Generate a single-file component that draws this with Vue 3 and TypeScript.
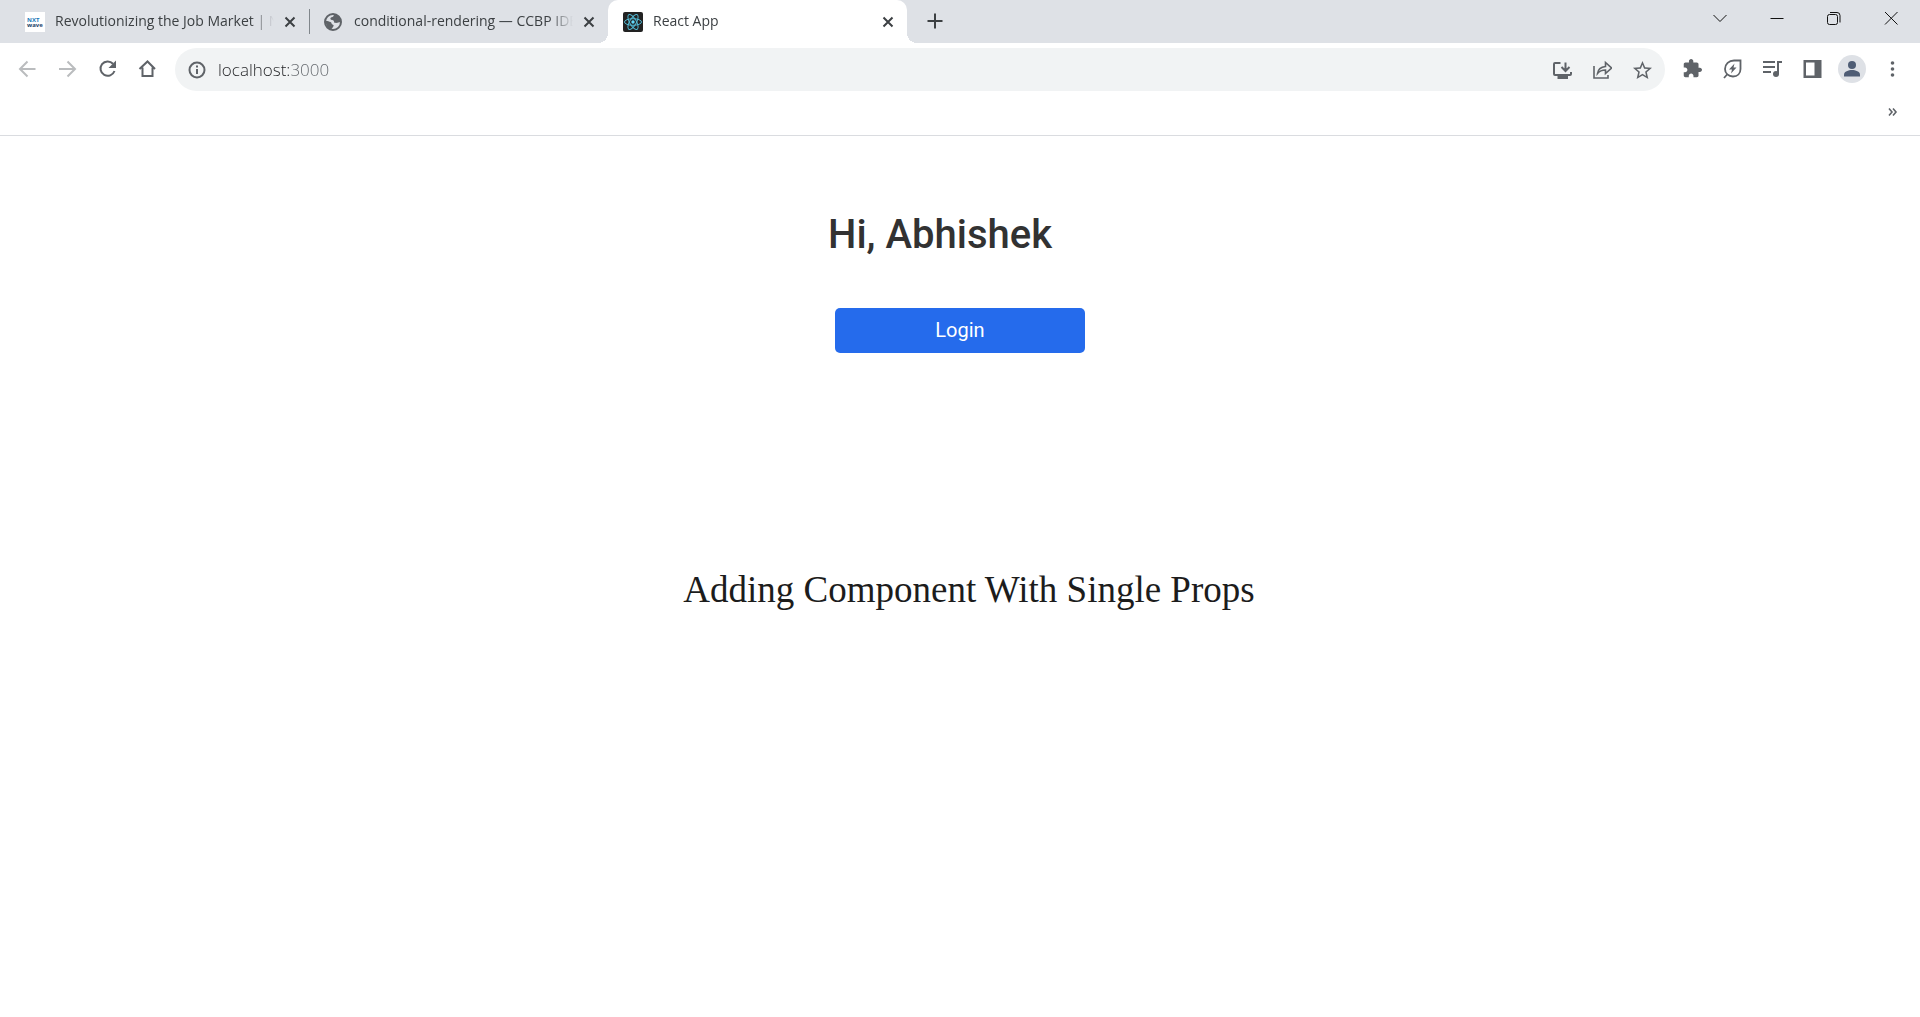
<script setup lang="ts">
import { ref } from 'vue'

interface Tab {
  id: string
  title: string
}

const tabs: Tab[] = [
  { id: 'nxtwave', title: 'Revolutionizing the Job Market | Nxt' },
  { id: 'globe', title: 'conditional-rendering — CCBP IDE' },
  { id: 'react', title: 'React App' },
]
const activeTab = ref('react')
const address = ref('localhost:3000')
</script>

<template>
  <div class="browser">
    <header>
      <div class="tab-strip">
        <div v-for="tab in tabs" :key="tab.id" class="tab" :class="{ active: tab.id === activeTab }">
          <button class="tab-select" type="button" @click="activeTab = tab.id">
            <svg v-if="tab.id === 'nxtwave'" class="icon" viewBox="0 0 20 20">
              <rect width="20" height="20" fill="#fff" />
              <text class="logo-text" x="2" y="10" fill="#1c79b8">NXT</text>
              <text class="logo-text" x="2" y="15" fill="#24436b">wave</text>
            </svg>
            <svg v-else-if="tab.id === 'globe'" class="icon" viewBox="0 0 20 20">
              <circle cx="9" cy="10" r="8" fill="#dee1e6" stroke="#5f6368" stroke-width="2" />
              <path d="M11 2.500c-2 .5-1 2-2.500 2.500s-2.500.5-2 2 3.500.5 3.500 2.500 3 1.500 4.500 1 2 .5 2.500-.5c0-4-2.500-7-6-7.500zM2 9c2 0 3 .5 4.500 1s.5 2 2 2.500 1.500 1 .5 2.500-1.500 2-2.500 2.500C3.500 16.500 1.500 13 2 9z" fill="#5f6368" />
            </svg>
            <svg v-else class="icon" viewBox="0 0 20 20">
              <rect width="20" height="20" rx="2" fill="#222" />
              <g fill="none" stroke="#53b9d3">
                <ellipse cx="10" cy="10" rx="8.500" ry="3.300" />
                <ellipse cx="10" cy="10" rx="8.500" ry="3.300" transform="rotate(60 10 10)" />
                <ellipse cx="10" cy="10" rx="8.500" ry="3.300" transform="rotate(120 10 10)" />
              </g>
              <circle cx="10" cy="10" r="1.700" fill="#61dafb" />
            </svg>
            <span class="tab-title">{{ tab.title }}</span>
          </button>
          <button class="tab-close" type="button" aria-label="Close tab">
            <svg class="icon" viewBox="0 0 20 20"><path d="M5.500 5.500l9 9M14.500 5.500l-9 9" fill="none" stroke="#3c4043" stroke-width="2" /></svg>
          </button>
        </div>
        <button class="icon-button new-tab" type="button" aria-label="New tab">
          <svg class="icon" viewBox="0 0 20 20"><path d="M10 2.500v15M2.500 10h15" stroke="#3c4043" stroke-width="2" /></svg>
        </button>
        <div class="window-controls">
          <button type="button" aria-label="Search tabs"><svg class="icon" viewBox="0 0 20 20"><path d="M3.500 7l6.500 6.500L16.500 7" /></svg></button>
          <button type="button" aria-label="Minimize"><svg class="icon" viewBox="0 0 20 20"><path d="M3.500 10.500h13" /></svg></button>
          <button type="button" aria-label="Restore"><svg class="icon" viewBox="0 0 20 20"><rect x="3.500" y="6.500" width="10" height="10" rx="2" /><path d="M6 4.500h7a3 3 0 0 1 3 3v7" /></svg></button>
          <button type="button" aria-label="Close window"><svg class="icon" viewBox="0 0 20 20"><path d="M4 4l12.500 12.500M16.500 4L4 16.500" /></svg></button>
        </div>
      </div>

      <div class="toolbar">
        <button class="icon-button disabled" type="button" aria-label="Back"><svg class="icon line" viewBox="0 0 20 20"><path d="M18.500 10H3.500M10.500 2.500L3 10l7.500 7.500" /></svg></button>
        <button class="icon-button disabled" type="button" aria-label="Forward"><svg class="icon line" viewBox="0 0 20 20"><path d="M2 10h15M10.500 2.500L18 10l-7.500 7.500" /></svg></button>
        <button class="icon-button" type="button" aria-label="Reload"><svg class="icon line" viewBox="0 0 20 20"><path d="M16 4.700A7.200 7.200 0 1 0 17.500 12" /><path d="M19 1.500V9h-7.500z" fill="#5f6368" stroke="none" /></svg></button>
        <button class="icon-button" type="button" aria-label="Home"><svg class="icon line" viewBox="0 0 20 20"><path d="M2.500 10L10.500 2.500l7.500 7.500M5.500 8.500V17h10V8.500" /></svg></button>

        <div class="omnibox">
          <svg class="icon line info" viewBox="0 0 20 20"><circle cx="10" cy="10" r="7.500" /><path d="M10 9v5M10 5.500v2" /></svg>
          <input v-model="address" class="address" type="text" aria-label="Address" spellcheck="false" />
          <button class="icon-button" type="button" aria-label="Install app"><svg class="icon line" viewBox="0 0 20 20"><path d="M8.500 3H3a1 1 0 0 0-1 1v10a1 1 0 0 0 1 1h15a1 1 0 0 0 1-1v-2M13.500 2.500v8M9.500 7l4 4 4-4" /><path d="M5.500 15h10.500v4H5.500z" fill="#5f6368" stroke="none" /></svg></button>
          <button class="icon-button" type="button" aria-label="Share"><svg class="icon line thin" viewBox="0 0 20 20"><path d="M2 6v12h14v-3" /><path d="M5.500 13.500c.5-4 3.500-6.500 8-7V2.500l6 5.500-6 5.500V10c-3.500 0-6 1-8 3.500z" /></svg></button>
          <button class="icon-button" type="button" aria-label="Bookmark"><svg class="icon" viewBox="1 1 21 21"><path fill="#5f6368" d="M22 9.240l-7.190-.62L12 2 9.190 8.630 2 9.240l5.460 4.730L5.820 21 12 17.270 18.180 21l-1.630-7.030L22 9.240zM12 15.400l-3.760 2.270 1-4.280-3.320-2.880 4.380-.38L12 6.100l1.710 4.040 4.380.38-3.320 2.880 1 4.280L12 15.400z" /></svg></button>
        </div>

        <div class="extensions">
          <button class="icon-button" type="button" aria-label="Extensions"><svg class="icon" viewBox="0 1 23 23"><path fill="#5f6368" d="M20.500 11H19V7c0-1.100-.9-2-2-2h-4V3.500C13 2.120 11.880 1 10.500 1S8 2.120 8 3.500V5H4c-1.100 0-1.990.9-1.990 2v3.800H3.500c1.490 0 2.700 1.210 2.700 2.700s-1.210 2.700-2.700 2.700H2V20c0 1.100.9 2 2 2h3.800v-1.500c0-1.490 1.210-2.700 2.700-2.700s2.700 1.210 2.700 2.700V22H17c1.100 0 2-.9 2-2v-4h1.500c1.380 0 2.500-1.120 2.500-2.500S21.880 11 20.500 11z" /></svg></button>
          <button class="icon-button" type="button" aria-label="Energy saver"><svg class="icon line leaf" viewBox="0 0 20 20"><path d="M18.500 1.500v8.500c0 4.500-3 7.500-7.500 7.500-4.500 0-8-3-8-7.500 0-5 4-8.500 9-8.500zM2 19l3.500-4" /><path d="M12.500 4.500L7 10.500h3L9 14.500l5.500-6h-3z" fill="#5f6368" stroke="none" /></svg></button>
          <button class="icon-button" type="button" aria-label="Media controls"><svg class="icon line" viewBox="0 0 20 20"><path d="M1 3h12M1 8h12M1 13h8M16 15V3h4" /><circle cx="14" cy="15" r="3" fill="#5f6368" stroke="none" /></svg></button>
          <button class="icon-button" type="button" aria-label="Side panel"><svg class="icon" viewBox="0 0 20 20"><path d="M1.500 1h18v18h-18zM4 3.500v13h8.500v-13z" fill="#5f6368" fill-rule="evenodd" /></svg></button>
          <button class="icon-button" type="button" aria-label="Profile"><svg class="avatar" viewBox="0 0 28 28"><circle cx="14" cy="14" r="14" fill="#dee1e6" /><circle cx="14" cy="10" r="4" fill="#4f5d75" /><path d="M6 21.500v-2c0-3 4.500-4.500 8-4.500s8 1.500 8 4.500v2z" fill="#4f5d75" /></svg></button>
          <button class="icon-button" type="button" aria-label="Menu"><svg class="icon" viewBox="0 0 20 20" fill="#5f6368"><circle cx="10.500" cy="4" r="1.800" /><circle cx="10.500" cy="10" r="1.800" /><circle cx="10.500" cy="16" r="1.800" /></svg></button>
        </div>
      </div>

      <div class="bookmarks">
        <button class="icon-button" type="button" aria-label="More bookmarks"><svg class="icon line thin" viewBox="0 0 20 20"><path d="M7 6.500l3 3.500-3 3.500M11 6.500l3 3.500-3 3.500" /></svg></button>
      </div>
    </header>

    <main>
      <section class="greeting">
        <h1>Hi, Abhishek</h1>
        <button class="login" type="button">Login</button>
      </section>
      <p class="caption">Adding Component With Single Props</p>
    </main>
  </div>
</template>

<style>
body {
  background: #fff;
}
</style>

<style scoped>
.browser {
  font-family: "Open Sans", "Noto Sans", sans-serif;
  color: #3c4043;
}

button {
  display: flex;
  align-items: center;
  justify-content: center;
  padding: 0;
  border: 0;
  background: none;
  font: inherit;
  color: inherit;
}

.icon {
  display: block;
  flex: none;
  width: 20px;
  height: 20px;
}

.avatar {
  display: block;
  flex: none;
  width: 28px;
  height: 28px;
}

.line {
  fill: none;
  stroke: #5f6368;
  stroke-width: 2;
}

.thin {
  stroke-width: 1.6;
}

.leaf {
  stroke-width: 1.8;
}

.icon-button {
  flex: none;
  width: 40px;
  height: 42px;
}

.disabled .line {
  stroke: #babcbe;
}

.tab-strip {
  display: flex;
  height: 43px;
  padding: 0 1px 0 10px;
  background: #dee1e6;
}

.tab {
  position: relative;
  display: flex;
  flex: 0 1 299px;
  align-items: center;
  min-width: 0;
}

.tab:first-child::after {
  content: "";
  position: absolute;
  right: -1px;
  top: 9px;
  width: 1px;
  height: 25px;
  background: #80868b;
}

.tab.active {
  border-radius: 10px 10px 0 0;
  background: #fff;
}

.tab.active::before,
.tab.active::after {
  content: "";
  position: absolute;
  bottom: 0;
  width: 10px;
  height: 10px;
}

.tab.active::before {
  right: 100%;
  background: radial-gradient(circle at 0 0, transparent 10px, #fff 10px);
}

.tab.active::after {
  left: 100%;
  background: radial-gradient(circle at 100% 0, transparent 10px, #fff 10px);
}

.tab-select {
  flex: 1;
  gap: 10px;
  min-width: 0;
  height: 42px;
  padding-left: 15px;
}

.tab-title {
  flex: 1;
  overflow: hidden;
  padding-bottom: 2px;
  font-size: 14px;
  line-height: 20px;
  text-align: left;
  white-space: nowrap;
  mask-image: linear-gradient(90deg, #000 calc(100% - 24px), transparent);
}

.tab-close {
  flex: none;
  width: 20px;
  height: 42px;
  margin: 0 9px 0 6px;
}

.logo-text {
  font: 700 6px "Open Sans", sans-serif;
}

.new-tab {
  margin-left: 8px;
}

.window-controls {
  display: flex;
  margin-left: auto;
}

.window-controls button {
  width: 57px;
  height: 36px;
}

.window-controls .icon {
  fill: none;
  stroke: #111;
}

.toolbar {
  display: flex;
  padding: 5px 8px 0 7px;
}

.omnibox {
  display: flex;
  flex: 1;
  align-items: center;
  min-width: 0;
  margin-left: 8px;
  padding: 0 3px 0 12px;
  border-radius: 22px;
  background: #f1f3f4;
}

.info {
  margin-right: 11px;
}

.address {
  flex: 1;
  min-width: 0;
  height: 43px;
  padding: 0;
  border: 0;
  outline: 0;
  font-family: "Open Sans", "Noto Sans", sans-serif;
  font-size: 17px;
  font-weight: 300;
  color: transparent;
  background: linear-gradient(90deg, #202124 71px, #5f6368 71px);
  background-clip: text;
}

.extensions {
  display: flex;
  margin-left: 7px;
}

.bookmarks {
  display: flex;
  justify-content: flex-end;
  padding: 0 8px 2px 0;
  border-bottom: 1px solid #dadce0;
}

main {
  display: flex;
  flex-direction: column;
  align-items: center;
  padding-top: 75px;
}

.greeting {
  display: flex;
  flex-direction: column;
  align-items: center;
  width: 264px;
}

h1 {
  align-self: flex-start;
  margin: 0 0 49px;
  font: 500 40px/48px Roboto, sans-serif;
  color: #323232;
}

.login {
  width: 250px;
  height: 45px;
  padding-bottom: 2px;
  border-radius: 5px;
  background: #256bec;
  font: 400 20px/24px Roboto, sans-serif;
  color: #fff;
}

.caption {
  margin: 215px 0 0;
  padding-left: 18px;
  font: 37px/44px "Liberation Serif", serif;
  color: #1c1c1c;
}
</style>
